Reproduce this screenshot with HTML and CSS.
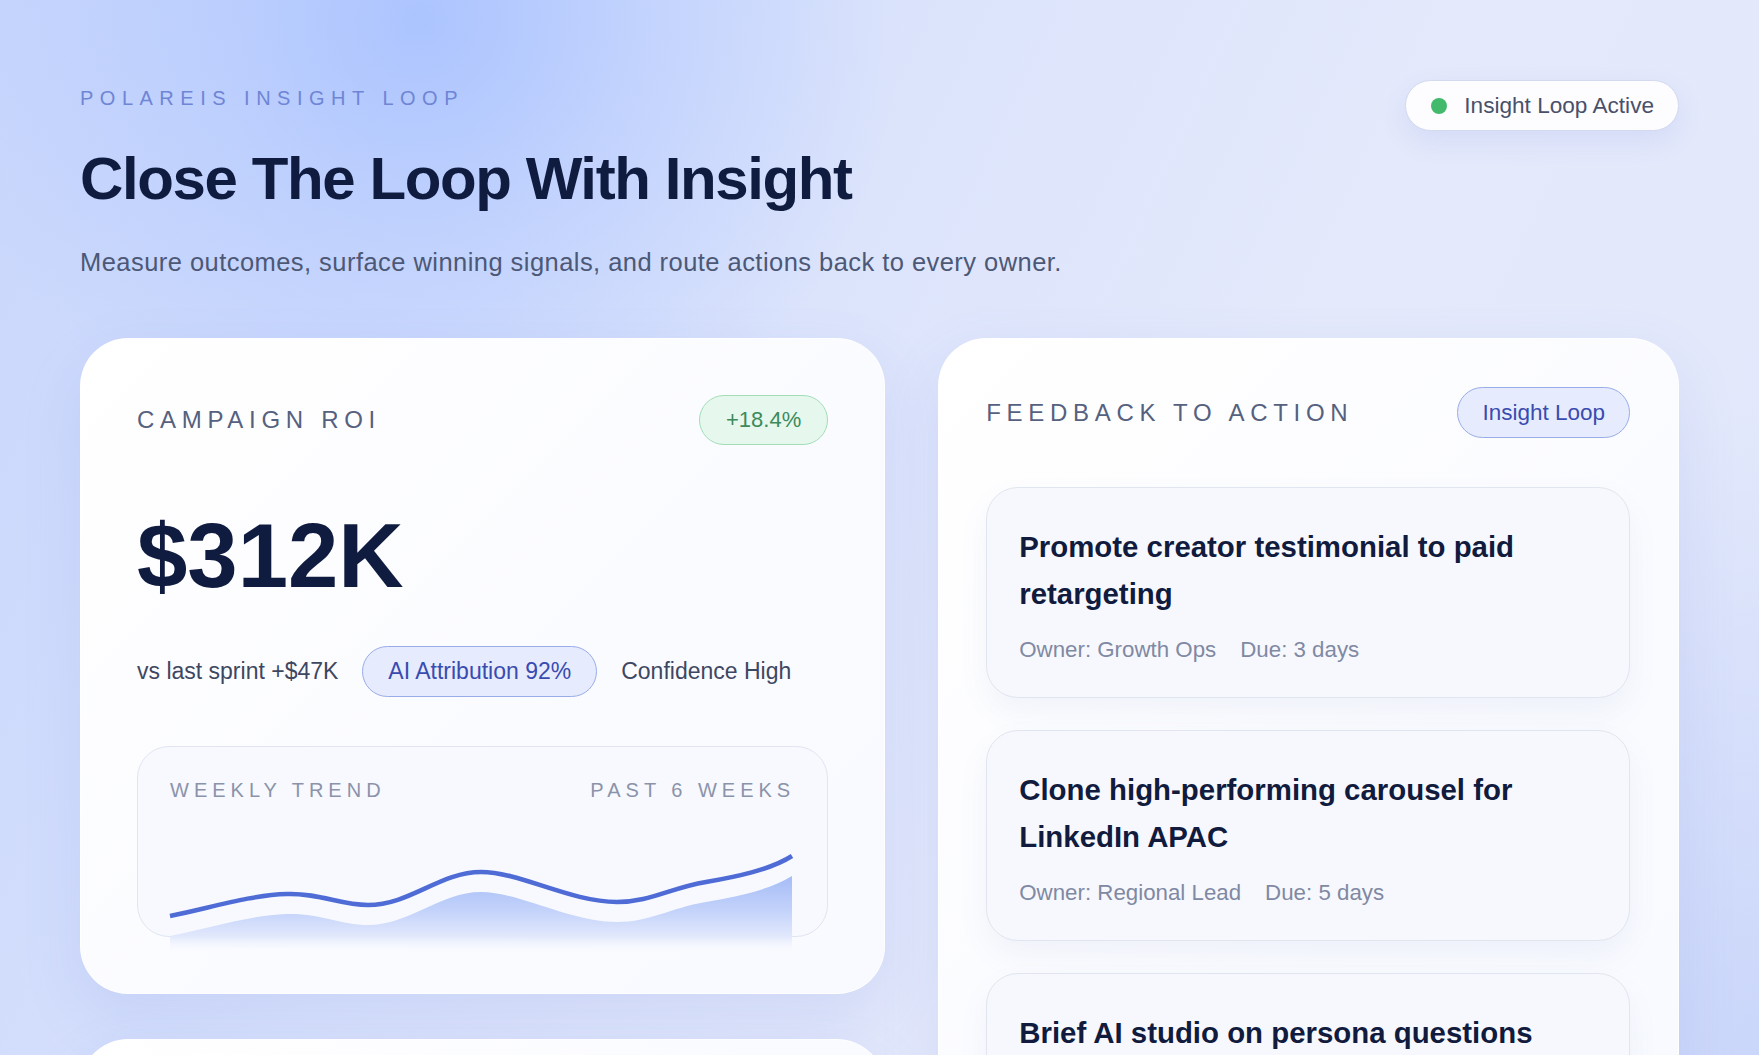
FILE: index.html
```html
<!DOCTYPE html>
<html lang="en">
<head>
<meta charset="utf-8">
<title>Polareis Insight Loop</title>
<link rel="stylesheet" href="styles.css">
</head>
<body>
<div class="page">
  <header class="hero">
    <div class="hero-text">
      <p class="eyebrow">POLAREIS INSIGHT LOOP</p>
      <h1 class="title">Close The Loop With Insight</h1>
      <p class="lead">Measure outcomes, surface winning signals, and route actions back to every owner.</p>
    </div>
    <div class="status-pill"><span class="status-dot"></span>Insight Loop Active</div>
  </header>

  <main class="grid">
    <div class="col-left">
      <section class="card roi-card">
        <div class="card-head">
          <h2 class="card-label">CAMPAIGN ROI</h2>
          <span class="badge-green">+18.4%</span>
        </div>
        <div class="roi-value">$312K</div>
        <div class="roi-meta">
          <span class="meta-text">vs last sprint +$47K</span>
          <span class="pill-blue pill-attr">AI Attribution 92%</span>
          <span class="meta-text">Confidence High</span>
        </div>
        <div class="trend-box">
          <div class="trend-head">
            <span class="trend-label">WEEKLY TREND</span>
            <span class="trend-label">PAST 6 WEEKS</span>
          </div>
          <div class="trend-chart">
            <svg class="trend-svg" viewBox="0 0 623 154" width="623" height="154">
              <defs>
                <linearGradient id="areaFill" x1="0" y1="55" x2="0" y2="154" gradientUnits="userSpaceOnUse">
                  <stop offset="0" stop-color="#95b0f5"/>
                  <stop offset="0.55" stop-color="#c4d3fa"/>
                  <stop offset="0.8" stop-color="#e1e8fc"/>
                  <stop offset="1" stop-color="#ffffff" stop-opacity="0"/>
                </linearGradient>
              </defs>
              <path d="M0,134 C40,126 80,113 117,112 C150,111 170,123 198,123 C240,123 270,90 311,90 C350,90 400,120 447,120 C480,120 500,106 536,100 C565,95 600,88 622,74 L622,154 L0,154 Z" fill="url(#areaFill)"/>
              <path d="M0,114 C40,106 80,93 117,92 C150,91 170,103 198,103 C240,103 270,70 311,70 C350,70 400,100 447,100 C480,100 500,86 536,80 C565,75 600,68 622,54" fill="none" stroke="#4f6cd6" stroke-width="4.5"/>
            </svg>
          </div>
        </div>
      </section>
      <section class="card next-card">
        <div class="card-head">
          <h2 class="card-label">CHANNEL SIGNALS</h2>
        </div>
      </section>
    </div>

    <section class="card feed-card">
      <div class="card-head">
        <h2 class="card-label">FEEDBACK TO ACTION</h2>
        <span class="pill-blue">Insight Loop</span>
      </div>
      <div class="action-list">
        <article class="action-item">
          <h3 class="action-title">Promote creator testimonial to paid retargeting</h3>
          <div class="action-meta"><span>Owner: Growth Ops</span><span>Due: 3 days</span></div>
        </article>
        <article class="action-item">
          <h3 class="action-title">Clone high-performing carousel for LinkedIn APAC</h3>
          <div class="action-meta"><span>Owner: Regional Lead</span><span>Due: 5 days</span></div>
        </article>
        <article class="action-item">
          <h3 class="action-title">Brief AI studio on persona questions</h3>
          <div class="action-meta"><span>Owner: Content Studio</span><span>Due: 7 days</span></div>
        </article>
      </div>
    </section>
  </main>
</div>
</body>
</html>
```

FILE: styles.css
```css
* { box-sizing: border-box; }

html, body {
  margin: 0;
  padding: 0;
  height: 100%;
  overflow: hidden;
}

body {
  font-family: "Liberation Sans", Arial, sans-serif;
  color: #0f1b3f;
  background:
    radial-gradient(circle at 420px 20px, rgba(170, 195, 255, 0.95) 0, rgba(170, 195, 255, 0.45) 220px, rgba(170, 195, 255, 0) 480px),
    radial-gradient(circle at 100% 100%, rgba(198, 211, 250, 0.85) 0, rgba(198, 211, 250, 0) 650px),
    linear-gradient(115deg, #c8d6fc 0%, #d9e2fc 35%, #e4e9fb 65%, #e2e8fb 100%);
}

.page {
  height: 100vh;
  overflow: hidden;
  padding: 80px 80px 0 80px;
}

/* Hero */
.hero {
  display: flex;
  justify-content: space-between;
  align-items: flex-start;
}

.eyebrow {
  margin: 6px 0 0 0;
  font-size: 20px;
  line-height: 24px;
  letter-spacing: 6.5px;
  color: #6f85d6;
}

.title {
  margin: 33px 0 0 0;
  font-size: 60px;
  line-height: 72px;
  font-weight: 700;
  letter-spacing: -1.4px;
  color: #0f1b3f;
}

.lead {
  margin: 30px 0 0 0;
  font-size: 25.5px;
  line-height: 34px;
  letter-spacing: 0.45px;
  color: #4c5876;
}

.status-pill {
  display: flex;
  align-items: center;
  gap: 17px;
  height: 51px;
  padding: 0 24px 0 25px;
  border: 1px solid #d3d9ee;
  border-radius: 999px;
  background: #fdfdff;
  box-shadow: 0 10px 26px rgba(100, 120, 210, 0.12);
  font-size: 22.6px;
  color: #495069;
}

.status-dot {
  width: 16px;
  height: 16px;
  border-radius: 50%;
  background: #43b96c;
}

/* Grid */
.grid {
  display: grid;
  grid-template-columns: 1.087fr 1fr;
  gap: 53px;
  align-items: start;
  margin-top: 59px;
}

.col-left {
  display: flex;
  flex-direction: column;
  gap: 45px;
}

.card {
  background: linear-gradient(135deg, #ffffff 0%, #fafbff 60%, #f8faff 100%);
  border: 1px solid rgba(255, 255, 255, 0.85);
  border-radius: 48px;
  box-shadow: 0 24px 60px rgba(105, 130, 220, 0.14);
}

.roi-card { padding: 56px; }
.next-card { padding: 56px; height: 320px; }
.feed-card { padding: 48px 48px 48px 47px; }

.card-head {
  display: flex;
  justify-content: space-between;
  align-items: center;
  min-height: 50px;
}

.card-label {
  margin: 0;
  font-size: 24px;
  line-height: 28px;
  font-weight: 400;
  letter-spacing: 5.7px;
  color: #55617e;
}

.badge-green {
  height: 50px;
  line-height: 48px;
  padding: 0 26px;
  border: 1px solid #a3ddb8;
  border-radius: 999px;
  background: #e6f8ed;
  color: #3d8a5b;
  font-size: 22px;
}

.roi-value {
  margin-top: 66px;
  font-size: 90.5px;
  line-height: 90px;
  font-weight: 700;
  color: #0f1b3f;
}

.roi-meta {
  display: flex;
  align-items: center;
  gap: 24px;
  margin-top: 45px;
}

.meta-text {
  font-size: 23px;
  color: #3e4762;
}

.pill-blue {
  height: 51px;
  line-height: 49px;
  padding: 0 24px;
  border: 1px solid #99ace8;
  border-radius: 999px;
  background: #e6ecfd;
  color: #3a4bb0;
  font-size: 22.5px;
}

.pill-attr {
  padding: 0 25px;
  font-size: 23px;
}

/* Trend */
.trend-box {
  margin-top: 49px;
  height: 191px;
  padding: 31px 32px 0 32px;
  border: 1px solid #e0e5f1;
  border-radius: 32px;
  background: #f7f9fe;
}

.trend-head {
  display: flex;
  justify-content: space-between;
}

.trend-label {
  font-size: 20px;
  line-height: 24px;
  letter-spacing: 5px;
  color: #8b93ab;
}

.trend-chart {
  height: 134px;
  overflow: visible;
}

.trend-svg {
  display: block;
  overflow: visible;
}

/* Feed */
.action-list {
  display: flex;
  flex-direction: column;
  gap: 32px;
  margin-top: 49px;
}

.action-item {
  padding: 35px 32px 33px 32px;
  border: 1px solid #e1e5ef;
  border-radius: 32px;
  background: #f7f8fd;
  box-shadow: 0 14px 30px rgba(90, 110, 180, 0.07);
}

.action-title {
  margin: 0;
  font-size: 29.4px;
  line-height: 47px;
  font-weight: 700;
  color: #111b3d;
}

.action-meta {
  display: flex;
  gap: 24px;
  margin-top: 19px;
  font-size: 22.3px;
  line-height: 28px;
  color: #8089a3;
}
```
